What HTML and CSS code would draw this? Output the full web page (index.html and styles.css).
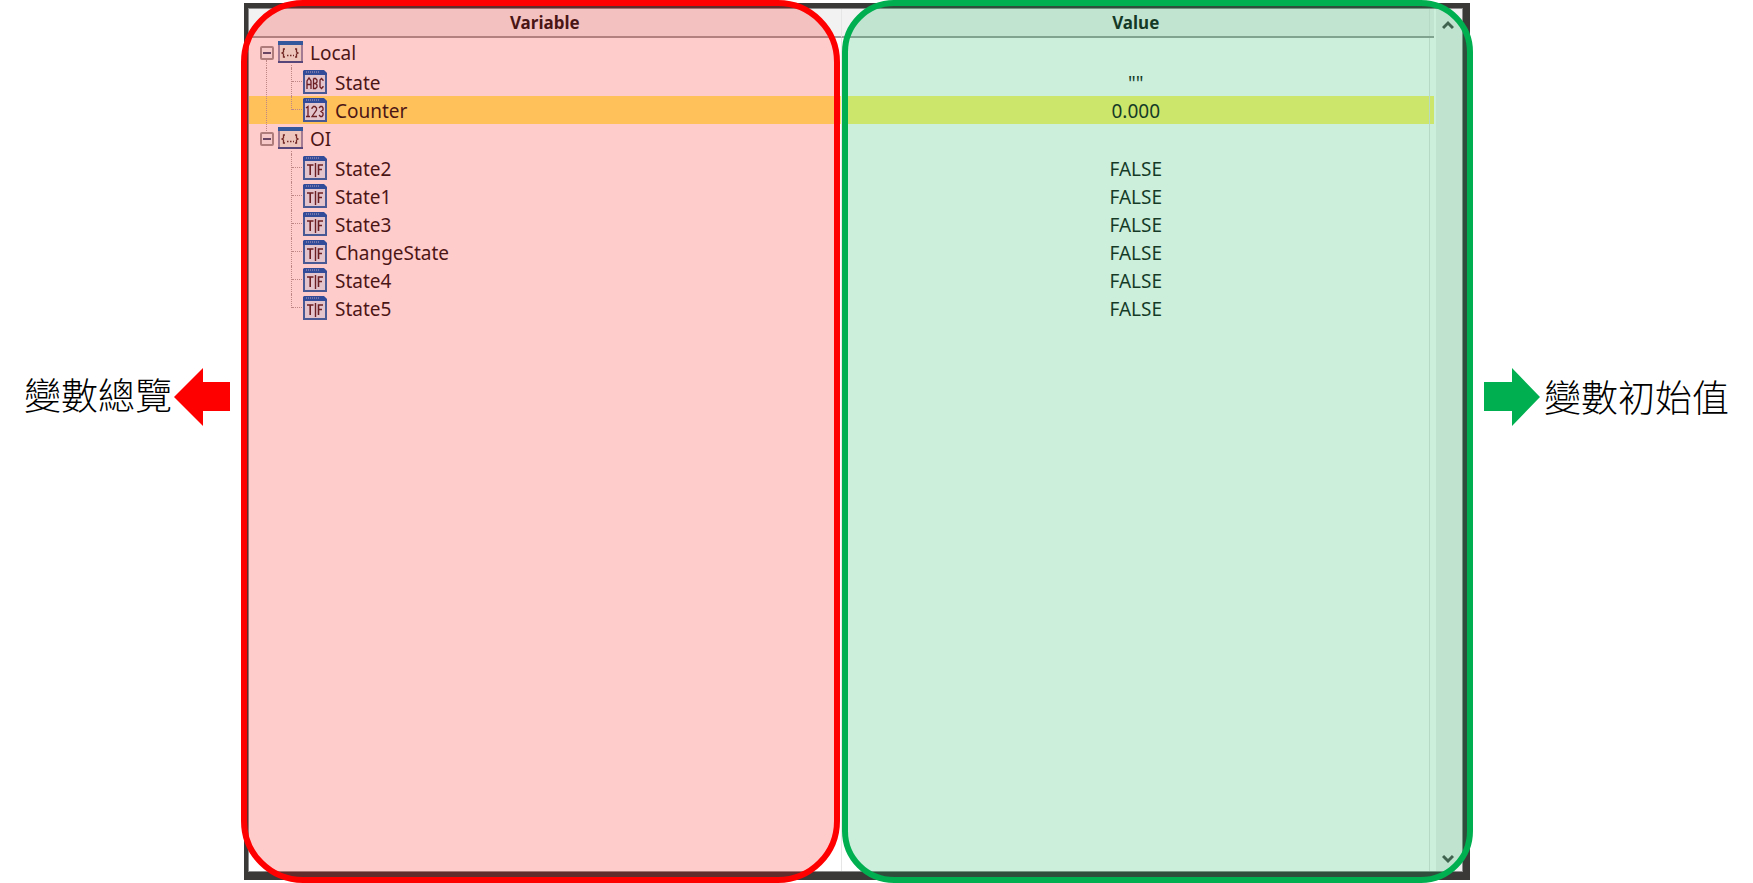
FILE: index.html
```html
<!DOCTYPE html>
<html lang="zh-Hant">
<head>
<meta charset="utf-8">
<title>變數總覽</title>
<link rel="stylesheet" href="styles.css">
</head>
<body>
<svg class="defs" aria-hidden="true">
  <defs>
    <symbol id="folder" viewBox="0 0 25 22">
      <rect x="1" y="1" width="23" height="20" fill="#eaf8ea" stroke="#8c9cba" stroke-width="2"/>
      <path d="M0 2H25" stroke="#0070c4" stroke-width="4"/>
      <path d="M0 21H25" stroke="#2c5898" stroke-width="2"/>
      <path d="M7 8H5.5V11L4 12L5.5 13V16H7M17 8H18.500V11L20 12L18.500 13V16H17" fill="none" stroke="#503430" stroke-width="1.300"/>
      <path d="M9 14.500H16" stroke="#503430" stroke-width="1.300" stroke-dasharray="1.500 1.500"/>
    </symbol>
    <symbol id="sheet" viewBox="0 0 24 24">
      <path d="M1 2H21L23 4V23H1Z" fill="#dcf4ff" stroke="#1c70b8" stroke-width="2"/>
      <path d="M1 0H21L24 3V5H0V1Z" fill="#0060c0"/>
      <path d="M3 2H17" stroke="#a8c8ec" stroke-width="1" stroke-dasharray="1 1"/>
    </symbol>
    <symbol id="abc" viewBox="0 0 24 24">
      <use href="#sheet"/>
      <path d="M4 19V11L6 8L8 11V19M4 14.500H8M10.500 8.500V18.500H12.500L14 17V15L12.500 13.500H10.500M10.500 8.500H12.500L14 10V12L12.500 13.500M20 11V10L18.500 8.500L17 10V17L18.500 18.500L20 17V16" fill="none" stroke="#48282c" stroke-width="1.300"/>
    </symbol>
    <symbol id="num" viewBox="0 0 24 24">
      <use href="#sheet"/>
      <path d="M3 10L5 8.500V18.500M3 18.500H7M9 11V10L10.500 8.500H12L13.500 10V12L9 18.500H14M16 10L17.500 8.500H19L20 10V12L18 13.500L20 15V17L19 18.500H17.500L16 17" fill="none" stroke="#48282c" stroke-width="1.300"/>
    </symbol>
    <symbol id="tf" viewBox="0 0 24 24">
      <use href="#sheet"/>
      <path d="M4 9H10.500M7.200 9V19M15.500 19V9H20M15.500 13.500H19" fill="none" stroke="#48282c" stroke-width="1.600"/>
      <path d="M12.500 7V21" stroke="#48282c" stroke-width="1.400"/>
    </symbol>
  </defs>
</svg>

<main class="page">
  <aside class="note note-left">
    <span class="note-text">變數總覽</span>
    <svg class="arrow" viewBox="0 0 56 58" aria-hidden="true"><path d="M0 29L29 0V14H56V43H29V58Z" fill="#ff0000"/></svg>
  </aside>

  <section class="panel">
    <div class="frame">
      <div class="list">
      <table class="vars">
        <thead>
          <tr><th scope="col">Variable</th><th scope="col">Value</th></tr>
        </thead>
        <tbody>
          <tr class="root">
            <td><div class="node first"><button class="toggle" type="button" aria-label="Collapse Local"></button><svg class="folder" aria-hidden="true"><use href="#folder"/></svg><span>Local</span></div></td><td></td>
          </tr>
          <tr class="child">
            <td><div class="node outer"><svg class="icon" aria-hidden="true"><use href="#abc"/></svg><span>State</span></div></td><td>""</td>
          </tr>
          <tr class="child selected">
            <td><div class="node outer last"><svg class="icon" aria-hidden="true"><use href="#num"/></svg><span>Counter</span></div></td><td>0.000</td>
          </tr>
          <tr class="root">
            <td><div class="node next"><button class="toggle" type="button" aria-label="Collapse OI"></button><svg class="folder" aria-hidden="true"><use href="#folder"/></svg><span>OI</span></div></td><td></td>
          </tr>
          <tr class="child">
            <td><div class="node"><svg class="icon" aria-hidden="true"><use href="#tf"/></svg><span>State2</span></div></td><td>FALSE</td>
          </tr>
          <tr class="child">
            <td><div class="node"><svg class="icon" aria-hidden="true"><use href="#tf"/></svg><span>State1</span></div></td><td>FALSE</td>
          </tr>
          <tr class="child">
            <td><div class="node"><svg class="icon" aria-hidden="true"><use href="#tf"/></svg><span>State3</span></div></td><td>FALSE</td>
          </tr>
          <tr class="child">
            <td><div class="node"><svg class="icon" aria-hidden="true"><use href="#tf"/></svg><span>ChangeState</span></div></td><td>FALSE</td>
          </tr>
          <tr class="child">
            <td><div class="node"><svg class="icon" aria-hidden="true"><use href="#tf"/></svg><span>State4</span></div></td><td>FALSE</td>
          </tr>
          <tr class="child">
            <td><div class="node last"><svg class="icon" aria-hidden="true"><use href="#tf"/></svg><span>State5</span></div></td><td>FALSE</td>
          </tr>
          <tr class="filler"><td></td><td></td></tr>
        </tbody>
      </table>
      </div>
      <div class="scrollbar">
        <button type="button" aria-label="Scroll up"><svg viewBox="0 0 12 10" aria-hidden="true"><path d="M1 8L6 3L11 8" fill="none" stroke="#505050" stroke-width="3"/></svg></button>
        <button type="button" aria-label="Scroll down"><svg viewBox="0 0 12 10" aria-hidden="true"><path d="M1 2L6 7L11 2" fill="none" stroke="#505050" stroke-width="3"/></svg></button>
      </div>
    </div>
    <div class="mark mark-red"></div>
    <div class="mark mark-green"></div>
  </section>

  <aside class="note note-right">
    <svg class="arrow" viewBox="0 0 56 58" aria-hidden="true"><path d="M56 29L28 0V14H0V43H28V58Z" fill="#00b050"/></svg>
    <span class="note-text">變數初始值</span>
  </aside>
</main>
</body>
</html>
```

FILE: styles.css
```css
* {
  box-sizing: border-box;
}

body {
  margin: 0;
  background: #fff;
  color: #1c1c1c;
  font-family: "Noto Sans", "Open Sans", sans-serif;
  font-size: 19px;
}

button {
  margin: 0;
  padding: 0;
  border: 0;
  background: none;
}

.defs {
  position: absolute;
  width: 0;
  height: 0;
}

.page {
  display: grid;
  grid-template-columns: 241fr 1232fr 280fr;
  min-height: 100vh;
}

.note {
  display: flex;
  align-items: flex-start;
  padding-top: 368px;
  color: #000;
  font-family: "Noto Sans CJK TC", sans-serif;
  font-size: 37px;
  font-weight: 300;
  line-height: 56px;
  white-space: nowrap;
}

.note-left {
  justify-content: flex-end;
  padding-right: 11px;
}

.note-left .note-text {
  padding-right: 2px;
  line-height: 52px;
}

.note-right {
  padding-left: 11px;
}

.note-right .note-text {
  padding-left: 4px;
}

.arrow {
  flex: none;
  width: 56px;
  height: 58px;
}

.panel {
  position: relative;
  display: flex;
  padding: 3px;
}

.frame {
  flex: 1;
  display: flex;
  border: solid #3b3838;
  border-width: 5px 7px 8px 4px;
  box-shadow: inset 0 0 0 1px #8c8c8c;
  padding: 1px;
}

.list {
  flex: 1;
  display: grid;
}

.vars {
  width: 100%;
  height: 100%;
  border-collapse: separate;
  border-spacing: 0;
  table-layout: fixed;
}

.vars th {
  width: 50%;
  height: 29px;
  padding: 0;
  background: #f2f2f2;
  border-bottom: 2px solid #a0a0a0;
  font-size: 17px;
  line-height: 26px;
}

.vars th:first-child,
.vars td:first-child {
  border-right: 1px solid #e6e6e6;
}

.vars th:last-child,
.vars td:last-child {
  padding-right: 4px;
  background-image: linear-gradient(#e4e4e4, #e4e4e4);
  background-position: right 4px top 0;
  background-size: 1px 100%;
  background-repeat: no-repeat;
}

.vars td {
  padding: 0;
  text-align: center;
  line-height: 26px;
}

.root td {
  height: 30px;
}

.child td {
  height: 28px;
}

.child td:last-child {
  padding-top: 2px;
}

.selected td {
  background-color: #fff372;
}

.node {
  position: relative;
  display: flex;
  align-items: center;
  height: 28px;
  padding-left: 54px;
  text-align: left;
}

.root .node {
  height: 30px;
  padding-left: 11px;
}

.node span {
  padding-left: 7px;
}

.child .node span {
  padding-top: 2px;
  padding-left: 8px;
}

.child .node::before {
  content: "";
  position: absolute;
  left: 42px;
  top: 0;
  bottom: 0;
  border-left: 1px dotted #b0a8a8;
}

.child .last::before {
  bottom: 14px;
}

.child .node::after {
  content: "";
  position: absolute;
  left: 43px;
  top: 13px;
  width: 10px;
  border-top: 1px dotted #b0a8a8;
}

.child .outer {
  background: repeating-linear-gradient(#b0a8a8 0 1px, transparent 1px 2px) 17px 0 / 1px 100% no-repeat;
}

.root .node::before {
  content: "";
  position: absolute;
  left: 42px;
  top: 27px;
  bottom: 0;
  border-left: 1px dotted #b0a8a8;
}

.root .node::after {
  content: "";
  position: absolute;
  left: 17px;
  border-left: 1px dotted #b0a8a8;
}

.root .first::after {
  top: 22px;
  bottom: 0;
}

.root .next::after {
  top: 0;
  height: 7px;
}

.toggle {
  width: 14px;
  height: 14px;
  margin-right: 4px;
  border: 2px solid #9c9c9c;
  border-radius: 2px;
  background: linear-gradient(#44587c, #44587c) center / 8px 2px no-repeat #f6fafa;
}

.folder {
  width: 25px;
  height: 22px;
  margin-bottom: 3px;
}

.icon {
  width: 24px;
  height: 24px;
}

.scrollbar {
  flex: none;
  display: flex;
  flex-direction: column;
  justify-content: space-between;
  width: 26px;
  margin-left: 2px;
  padding: 10px 2px 6px 0;
  background: #f0f0f0;
}

.scrollbar button {
  height: 12px;
  display: flex;
  align-items: center;
  justify-content: center;
}

.scrollbar svg {
  width: 12px;
  height: 10px;
}

.mark {
  position: absolute;
  top: 0;
  bottom: 0;
  pointer-events: none;
}

.mark-red {
  left: 0;
  width: 48.6%;
  border: 6px solid #ff0000;
  border-radius: 62px;
  background: rgba(255, 0, 0, 0.2);
}

.mark-green {
  right: 0;
  width: 51.2%;
  border: 6px solid #00b050;
  border-radius: 52px;
  background: rgba(0, 176, 80, 0.2);
}
```
